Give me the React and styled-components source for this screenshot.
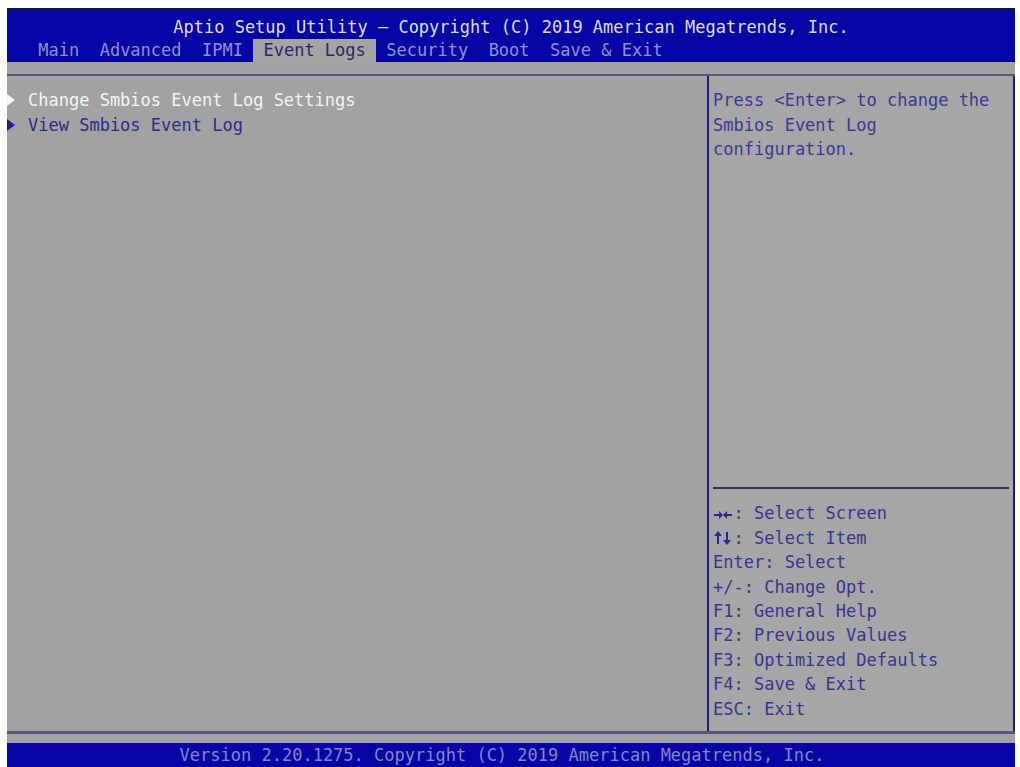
import styled, { createGlobalStyle } from "styled-components";

const BLUE = "#0606a6";
const GRAY = "#a2a2a2";

const GlobalStyle = createGlobalStyle`
	html, body {
		margin: 0;
		background: #ffffff;
	}
	body {
		font-family: "DejaVu Sans Mono", "Liberation Mono", monospace;
		font-size: 17px;
	}
`;

const SCREEN = styled.div`
	display: flex;
	flex-direction: column;
	width: 1008px;
	height: 759px;
	margin: 8px 0 0 7px;
`;
const HEADER = styled.div`
	height: 54px;
	box-sizing: border-box;
	background: ${BLUE};
	border-top: 3px solid #10104e;
	padding-top: 4px;
`;
const TITLE = styled.div`
	text-align: center;
	line-height: 24px;
	color: #dcdce6;
	white-space: pre;
`;
const TABS = styled.div`
	display: flex;
	padding-left: 21px;
	height: 23px;
	line-height: 23px;
`;
const TAB = styled.span`
	padding: 0 1ch;
	white-space: pre;
	color: ${(p) => (p.$active ? "#2a2a62" : "#8f90d6")};
	background: ${(p) => (p.$active ? "#a4a4a4" : "transparent")};
`;
const BODY = styled.div`
	flex: 1;
	display: flex;
	flex-direction: column;
	background: ${GRAY};
	padding: 12px 0 9px;
`;
const FRAME = styled.div`
	flex: 1;
	display: grid;
	grid-template-columns: 700px 1fr;
	border-top: 2px solid #56567a;
	border-bottom: 3px solid #56567a;
`;
const MENU = styled.div`
	padding-top: 12px;
`;
const ITEM = styled.div`
	display: flex;
	align-items: center;
	line-height: 24.5px;
	white-space: pre;
	color: ${(p) => (p.$selected ? "#f4f4f4" : "#2c2c8e")};
`;
const ARROW = styled.span`
	width: 0;
	height: 0;
	border-left: 8px solid ${(p) => (p.$selected ? "#f4f4f4" : "#1c1ca6")};
	border-top: 6px solid transparent;
	border-bottom: 6px solid transparent;
	margin-right: 13px;
`;
const HELP = styled.div`
	display: flex;
	flex-direction: column;
	background: #a6a6a6;
	border-left: 2px solid #1c1c7e;
	border-right: 2px solid #1c1c7e;
	padding: 12px 4px 10px;
`;
const HELPTEXT = styled.div`
	flex: 1;
	color: #3a3a96;
	line-height: 24.5px;
	white-space: pre;
`;
const RULE = styled.div`
	height: 2px;
	background: #34345a;
	margin-bottom: 12px;
`;
const KEY = styled.div`
	display: flex;
	align-items: center;
	color: #36368e;
	line-height: 24.4px;
	white-space: pre;
`;
const KEYICON = styled.svg`
	width: 20px;
	height: 14px;
	margin-right: 0.5px;
	flex: none;
`;
const FOOTER = styled.div`
	height: 24px;
	line-height: 24px;
	background: ${BLUE};
	color: #8484c8;
	text-align: center;
	padding-right: 18px;
	white-space: pre;
`;

const LeftRight = () => (
	<KEYICON viewBox="0 0 20 14" fill="#2a2a8a" stroke="#2a2a8a" strokeWidth="2">
		<line x1="1" y1="8" x2="7" y2="8" />
		<polygon points="6,4 10,8 6,12" stroke="none" />
		<line x1="13" y1="8" x2="19" y2="8" />
		<polygon points="14,4 10,8 14,12" stroke="none" />
	</KEYICON>
);

const UpDown = () => (
	<KEYICON viewBox="0 0 20 14" fill="#2a2a8a" stroke="#2a2a8a" strokeWidth="2">
		<line x1="5" y1="4" x2="5" y2="13" />
		<polygon points="1,5 5,0 9,5" stroke="none" />
		<line x1="14" y1="1" x2="14" y2="10" />
		<polygon points="10,9 14,14 18,9" stroke="none" />
	</KEYICON>
);

const tabs = ["Main", "Advanced", "IPMI", "Event Logs", "Security", "Boot", "Save & Exit"];
const keys = [
	[LeftRight, ": Select Screen"],
	[UpDown, ": Select Item"],
	[null, "Enter: Select"],
	[null, "+/-: Change Opt."],
	[null, "F1: General Help"],
	[null, "F2: Previous Values"],
	[null, "F3: Optimized Defaults"],
	[null, "F4: Save & Exit"],
	[null, "ESC: Exit"],
];

export default function App() {
	return (
		<>
			<GlobalStyle />
			<SCREEN>
				<HEADER>
					<TITLE>Aptio Setup Utility – Copyright (C) 2019 American Megatrends, Inc.</TITLE>
					<TABS>
						{tabs.map((t) => (
							<TAB key={t} $active={t === "Event Logs"}>
								{t}
							</TAB>
						))}
					</TABS>
				</HEADER>
				<BODY>
					<FRAME>
						<MENU>
							<ITEM $selected>
								<ARROW $selected />
								Change Smbios Event Log Settings
							</ITEM>
							<ITEM>
								<ARROW />
								View Smbios Event Log
							</ITEM>
						</MENU>
						<HELP>
							<HELPTEXT>
								{"Press <Enter> to change the\nSmbios Event Log\nconfiguration."}
							</HELPTEXT>
							<RULE />
							{keys.map(([Icon, k]) => (
								<KEY key={k}>
									{Icon && <Icon />}
									{k}
								</KEY>
							))}
						</HELP>
					</FRAME>
				</BODY>
				<FOOTER>Version 2.20.1275. Copyright (C) 2019 American Megatrends, Inc.</FOOTER>
			</SCREEN>
		</>
	);
}
